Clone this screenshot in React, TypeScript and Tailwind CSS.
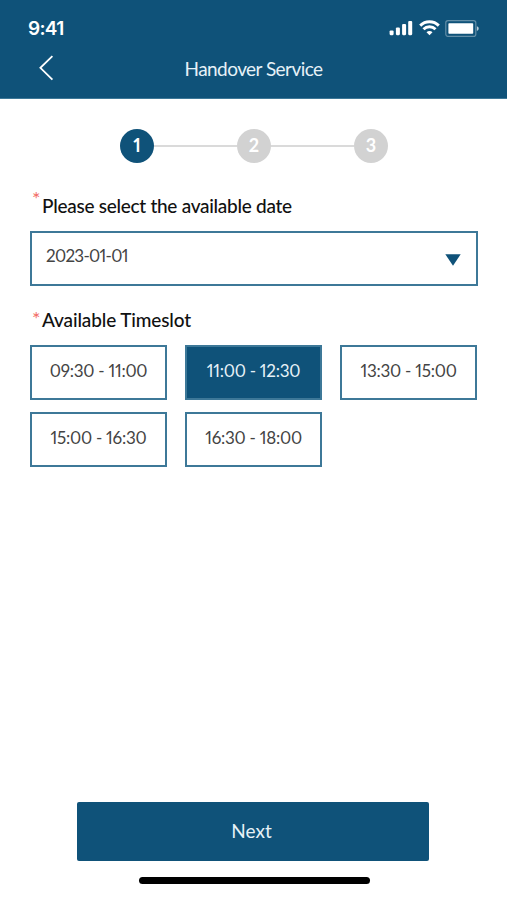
import React, { useState } from 'react';

const steps = [1, 2, 3];

const timeslots = [
  '09:30 - 11:00',
  '11:00 - 12:30',
  '13:30 - 15:00',
  '15:00 - 16:30',
  '16:30 - 18:00',
];

const StatusBar: React.FC = () => (
  <div className="flex h-[41px] items-end justify-between pl-7 pr-7">
    <span className="font-['Inter',sans-serif] text-[19px] font-semibold leading-[24px] tracking-[-0.7px]">9:41</span>
    <div className="flex h-[25px] items-center pb-px">
      <svg width="24" height="16" viewBox="0 0 24 16" fill="currentColor">
        <rect x="0.6" y="10.4" width="4" height="4.8" rx="1.1" />
        <rect x="6.9" y="7.4" width="4" height="7.8" rx="1.1" />
        <rect x="13.1" y="4" width="4" height="11.2" rx="1.1" />
        <rect x="19.2" y="0.9" width="4" height="14.3" rx="1.1" />
      </svg>
      <svg className="ml-[6px]" width="21" height="16" viewBox="0 0 21 16" fill="none" stroke="currentColor" strokeWidth="2.9">
        <path d="M1.2 5.6a13.2 13.2 0 0 1 18.6 0" />
        <path d="M4.5 9.3a8.4 8.4 0 0 1 12 0" />
        <path d="M10.5 15.2l-3-3a4.25 4.25 0 0 1 6 0z" fill="currentColor" stroke="none" />
      </svg>
      <svg className="ml-[5px]" width="34" height="17" viewBox="0 0 34 17">
        <rect x="0.8" y="0.6" width="30" height="15.8" rx="2.2" fill="none" stroke="currentColor" strokeWidth="1.2" opacity="0.35" />
        <rect x="3.4" y="3.2" width="24.8" height="10.6" rx="0.8" fill="currentColor" />
        <path d="M31.9 6.2c1.4.4 1.8 1.3 1.8 2.3s-.4 1.9-1.8 2.3z" fill="currentColor" opacity="0.7" />
      </svg>
    </div>
  </div>
);

const Stepper: React.FC<{ current: number }> = ({ current }) => (
  <div className="ml-[120px] mt-[30px] flex w-[268px] items-center">
    {steps.map((step) => (
      <React.Fragment key={step}>
        {step > 1 && <div className="h-[2px] flex-1 bg-[#dadada]" />}
        <div
          className={`flex h-[34px] w-[34px] items-center justify-center rounded-full pb-px text-[18px] font-bold leading-none text-white ${
            step === current ? 'bg-[#0f5279]' : 'bg-[#d2d2d2]'
          }`}
        >
          {step}
        </div>
      </React.Fragment>
    ))}
  </div>
);

const FieldLabel: React.FC<{ raised?: boolean; children: React.ReactNode }> = ({ raised, children }) => (
  <div className="flex h-6 items-start pl-[2px]">
    <span className={`w-[10px] text-[20px] leading-[18px] text-[#f26b66] ${raised ? '-mt-[5px]' : 'mt-px'}`}>*</span>
    <span
      className={`whitespace-nowrap text-[19px] font-medium leading-6 text-[#111] ${
        raised ? 'tracking-[-0.28px]' : 'tracking-[-0.13px]'
      }`}
    >
      {children}
    </span>
  </div>
);

const App: React.FC = () => {
  const [selected, setSelected] = useState('11:00 - 12:30');

  return (
    <div className="flex h-[900px] w-[507px] flex-col overflow-hidden bg-white font-['Lato',sans-serif] proportional-nums">
      <header className="h-[98.5px] border-b border-[#3d7898] bg-[#0f5279] text-white">
        <StatusBar />
        <div className="grid h-[56px] grid-cols-[1fr_auto_1fr] items-center">
          <button className="-mt-[3px] ml-[38px] w-4" aria-label="Back">
            <svg width="16" height="26" viewBox="0 0 16 26" fill="none" stroke="currentColor" strokeWidth="1.8">
              <path d="M14.4 1.2L2.4 12.8l12 11.8" />
            </svg>
          </button>
          <h1 className="text-[19px] leading-6 tracking-[-0.55px] text-[#e6f1f7]">Handover Service</h1>
        </div>
      </header>

      <Stepper current={1} />

      <main className="flex flex-1 flex-col pl-[30px] pr-[29px] pt-[31px]">
        <FieldLabel raised>Please select the available date</FieldLabel>
        <button className="mt-[13px] flex h-[55px] items-center justify-between border-2 border-[#3d7898] pl-[14px] pr-[15px] text-[17px] tracking-[-0.7px] text-[#444]">
          <span className="pb-1">2023-01-01</span>
          <svg width="16" height="12" viewBox="0 0 16 12" fill="#0f5279" className="mt-[3px]">
            <path d="M0.3 0.3h15.4L8 11.8z" />
          </svg>
        </button>

        <div className="mt-[22px]">
          <FieldLabel>Available Timeslot</FieldLabel>
        </div>
        <div className="mr-px mt-[13px] grid grid-cols-3 gap-x-[18px] gap-y-3">
          {timeslots.map((slot) => (
            <button
              key={slot}
              onClick={() => setSelected(slot)}
              className={`h-[55px] whitespace-nowrap border-2 border-[#3d7898] pb-[2px] text-[17px] leading-6 tracking-[-0.25px] ${
                slot === selected ? 'bg-[#0f5279] text-[#e6f1f7]' : 'text-[#444]'
              }`}
            >
              {slot}
            </button>
          ))}
        </div>
      </main>

      <footer className="flex flex-col pb-4">
        <button className="ml-[77px] h-[59px] w-[352px] rounded-[2px] bg-[#0f5279] text-[19px] text-[#e6f1f7]">
          <span className="mr-[3px]">Next</span>
        </button>
        <div className="ml-[138.5px] mt-4 h-[7px] w-[231px] rounded-full bg-black" />
      </footer>
    </div>
  );
};

export default App;
